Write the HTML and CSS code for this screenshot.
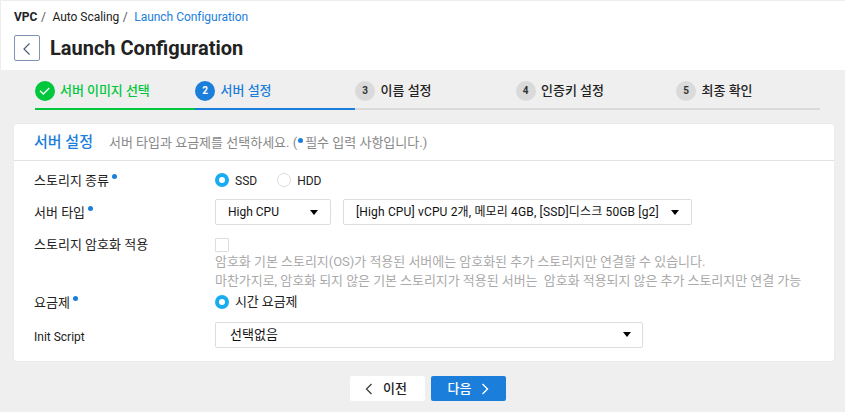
FILE: index.html
```html
<!DOCTYPE html>
<html lang="ko">
<head>
<meta charset="utf-8">
<title>Launch Configuration</title>
<link rel="stylesheet" href="styles.css">
</head>
<body>
<header class="top">
  <nav class="crumbs"><b>VPC</b><i>/</i><span class="crumb-mid">Auto Scaling</span><i>/</i><a>Launch Configuration</a></nav>
  <div class="title">
    <button class="back" aria-label="back"><svg width="24" height="24" viewBox="0 0 24 24"><path d="M14.500 7.500 9 13l5.500 5.500"/></svg></button>
    <h1>Launch Configuration</h1>
  </div>
</header>
<ol class="steps">
  <li class="done"><span class="num"><svg width="20" height="20" viewBox="0 0 20 20"><path d="M5 9.800 8.300 13l6-6"/></svg></span>서버 이미지 선택</li>
  <li class="now"><span class="num">2</span>서버 설정</li>
  <li><span class="num">3</span>이름 설정</li>
  <li><span class="num">4</span>인증키 설정</li>
  <li class="last"><span class="num">5</span>최종 확인</li>
</ol>
<main class="card">
  <div class="card-head"><h2>서버 설정</h2><p>서버 타입과 요금제를 선택하세요. (<span class="dot"></span>필수 입력 사항입니다.)</p></div>
  <div class="row kind"><div class="label">스토리지 종류<span class="dot"></span></div>
    <div class="field"><span class="radio on"></span><span class="opt ssd">SSD</span><span class="radio"></span><span class="opt">HDD</span></div></div>
  <div class="row type"><div class="label">서버 타입<span class="dot"></span></div>
    <div class="field"><div class="select cpu"><span>High CPU</span><svg width="8" height="5" viewBox="0 0 8 5"><path d="M0 0h8L4 5z"/></svg></div><div class="select spec"><span>[High CPU] vCPU 2개, 메모리 4GB, [SSD]디스크 50GB [g2]</span><svg width="8" height="5" viewBox="0 0 8 5"><path d="M0 0h8L4 5z"/></svg></div></div></div>
  <div class="row crypt"><div class="label">스토리지 암호화 적용</div>
    <div class="stack"><span class="check"></span><p class="n1">암호화 기본 스토리지(OS)가 적용된 서버에는 암호화된 추가 스토리지만 연결할 수 있습니다.</p><p class="n2">마찬가지로, 암호화 되지 않은 기본 스토리지가 적용된 서버는 &nbsp;암호화 적용되지 않은 추가 스토리지만 연결 가능</p></div></div>
  <div class="row plan"><div class="label">요금제<span class="dot"></span></div>
    <div class="field"><span class="radio on"></span><span class="opt ko">시간 요금제</span></div></div>
  <div class="row init"><div class="label en">Init Script</div>
    <div class="field"><div class="select script"><span>선택없음</span><svg width="8" height="5" viewBox="0 0 8 5"><path d="M0 0h8L4 5z"/></svg></div></div></div>
</main>
<footer class="actions">
  <button class="btn prev"><svg width="8" height="12" viewBox="0 0 8 12"><path d="M6.500 1 1.500 6l5 5"/></svg>이전</button>
  <button class="btn next">다음<svg width="8" height="12" viewBox="0 0 8 12"><path d="M1.500 1l5 5-5 5"/></svg></button>
</footer>
</body>
</html>
```
FILE: styles.css
```css
* { box-sizing: border-box; margin: 0; padding: 0; }
body { width: 845px; height: 412px; overflow: hidden; background: #efefef; color: #222; font: 12px/18px Roboto, "Noto Sans CJK KR", sans-serif; }
button { border: 0; font: inherit; color: inherit; }
svg { display: block; flex: none; }
.top { height: 70px; border: 1px solid #ededed; border-width: 1px 0 0 1px; background: #fff; padding: 7px 0 0 13px; }
.crumbs { display: flex; height: 18px; white-space: nowrap; }
.crumbs b { font-weight: 700; }
.crumbs i { font-style: normal; color: #555; margin: 0 6.500px 0 3.500px; }
.crumb-mid { letter-spacing: -0.02px; }
.crumbs a { color: #1b7edb; letter-spacing: -0.03px; }
.title { display: flex; align-items: center; margin-top: 9px; height: 26px; }
.back { width: 26px; height: 26px; border: 1px solid #8095b3; border-radius: 2px; background: #fff; }
.back path { fill: none; stroke: #4c5d75; stroke-width: 1.2; }
h1 { font-size: 20px; line-height: 24px; padding-bottom: 1px; font-weight: 700; margin-left: 10px; color: #222; }
.steps { display: flex; list-style: none; margin: 11px 25px 0 35px; height: 29px; }
.steps li { display: flex; flex: none; width: 160.500px; height: 29px; border-bottom: 2px solid #dadada; font-size: 13px; font-weight: 500; line-height: 19px; white-space: nowrap; }
.steps .last { width: 144px; }
.steps .now { width: 160px; }
.steps .done { width: 160px; }
.num { display: grid; place-items: center; flex: none; width: 20px; height: 20px; margin-right: 5.500px; border-radius: 50%; background: #dadada; color: #333; font: 700 10px/20px Roboto, sans-serif; }
.steps .done { color: #00c73c; border-color: #00c73c; letter-spacing: -0.05px; }
.steps .done .num { background: #00c73c; margin-right: 5px; }
.steps .done path { fill: none; stroke: #fff; stroke-width: 1.3; }
.steps .now { color: #1b7edb; border-color: #1b7edb; }
.now .num { background: #1b7edb; color: #fff; }
.card { margin: 14px 11px 0 14px; height: 237px; background: #fff; border-radius: 2px; box-shadow: 0 0 1px #ccc; font-size: 13px; }
.card-head { display: flex; align-items: center; height: 37px; border-bottom: 1px solid #e2e2e2; padding-left: 20px; color: #888; white-space: nowrap; }
.card-head h2 { font-size: 15px; font-weight: 500; color: #1b7edb; margin-right: 16px; }
.card-head p { padding-top: 1px; }
.dot { display: inline-block; width: 5px; height: 5px; border-radius: 50%; background: #1b7edb; margin: 0 2px 0 3px; vertical-align: 6px; }
.card-head .dot { margin-left: 1px; vertical-align: 4px; }
.row { display: grid; grid-template-columns: 181px 1fr; padding-left: 20px; align-items: center; white-space: nowrap; }
.label { padding-top: 2px; }
.field { display: flex; align-items: center; font-size: 12px; }
.kind { height: 38px; }
.type { height: 26px; }
.crypt { height: 65px; align-items: start; padding-top: 10px; }
.crypt .label { padding-top: 1px; }
.plan { height: 24px; }
.init { height: 26px; margin-top: 8px; }
.label.en { font-size: 12px; padding-top: 3px; }
.radio { flex: none; width: 14px; height: 14px; border: 1px solid #ddd; border-radius: 50%; margin-right: 6px; }
.radio.on { border: 4px solid #1aacf0; }
.kind .opt { padding-top: 2px; }
.ssd { margin-right: 20px; }
.ko { font-size: 13px; letter-spacing: -0.1px; }
.select { display: flex; align-items: center; justify-content: space-between; height: 26px; border: 1px solid #ddd; border-radius: 2px; padding: 0 12px; color: #111; }
.select path { fill: #000; }
.cpu { width: 116px; margin-right: 12px; }
.spec { width: 349px; letter-spacing: 0.15px; }
.script { width: 428px; padding: 0 11px 0 14px; font-size: 13px; }
.script svg { margin-bottom: 2px; }
.stack { padding-top: 3px; color: #aaa; }
.check { display: block; width: 14px; height: 14px; border: 1px solid #ddd; border-radius: 1px; }
.stack p { line-height: 19px; }
.n1 { letter-spacing: -0.03px; }
.n2 { letter-spacing: -0.05px; }
.actions { display: flex; justify-content: center; gap: 6px; margin: 15px 0 0 11px; }
.btn { display: flex; align-items: center; justify-content: center; width: 75px; height: 25px; gap: 10px; border-radius: 2px; background: #fff; font-size: 13px; font-weight: 500; }
.prev { padding-right: 3px; }
.btn path { fill: none; stroke: #444; stroke-width: 1.4; }
.next { background: #1b7edb; color: #fff; }
.next path { stroke: #fff; }
```
